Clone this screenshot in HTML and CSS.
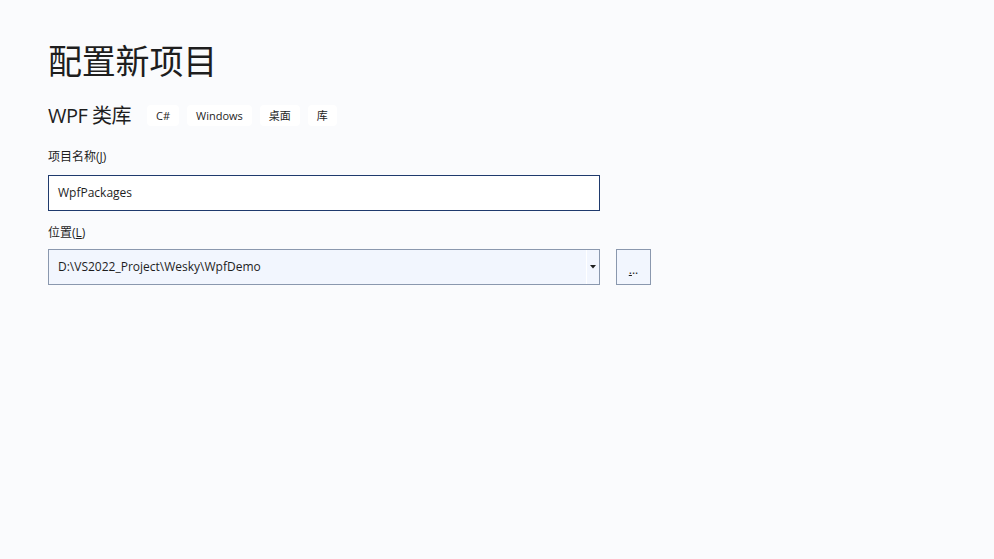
FILE: index.html
```html
<!DOCTYPE html>
<html lang="zh-CN">
<head>
<meta charset="utf-8">
<title>配置新项目</title>
<link rel="stylesheet" href="styles.css">
</head>
<body>
<main class="page">
  <h1 class="title">配置新项目</h1>
  <div class="subtitle-row">
    <span class="subtitle">WPF 类库</span>
    <ul class="tags">
      <li class="tag">C#</li>
      <li class="tag">Windows</li>
      <li class="tag">桌面</li>
      <li class="tag">库</li>
    </ul>
  </div>
  <label class="field-label">项目名称(<u>J</u>)</label>
  <div class="text-input">WpfPackages</div>
  <label class="field-label second">位置(<u>L</u>)</label>
  <div class="location-row">
    <div class="combo">
      <span class="combo-text">D:\VS2022_Project\Wesky\WpfDemo</span>
      <span class="combo-arrow">
        <svg width="6" height="4" viewBox="0 0 6 4"><path d="M0 0H6L3 3.5Z" fill="#1e1e1e"/></svg>
      </span>
    </div>
    <button class="browse"><u>.</u>..</button>
  </div>
</main>
</body>
</html>
```
FILE: styles.css
```css
html, body {
  margin: 0;
  padding: 0;
  background: #fafbfd;
}
body {
  font-family: "Open Sans", "Noto Sans", "Noto Sans CJK SC", sans-serif;
  color: #1e1e1e;
  width: 994px;
  height: 559px;
  overflow: hidden;
}
.page {
  display: flex;
  flex-direction: column;
  align-items: flex-start;
  padding: 38px 0 0 48px;
}
.title {
  margin: 0;
  font-family: "Noto Sans CJK SC", sans-serif;
  font-weight: 400;
  font-size: 34px;
  line-height: 44px;
  letter-spacing: -0.2px;
}
.subtitle-row {
  display: flex;
  align-items: center;
  margin-top: 23px;
  height: 21px;
}
.subtitle {
  font-family: "Open Sans", "Noto Sans CJK SC", sans-serif;
  font-size: 20px;
  line-height: 21px;
  letter-spacing: -0.5px;
  margin-right: 16px;
}
.tags {
  display: flex;
  gap: 8px;
  margin: 0;
  padding: 0;
  list-style: none;
}
.tag {
  background: #ffffff;
  border-radius: 4px;
  height: 21px;
  line-height: 21px;
  padding: 0 9px;
  font-size: 11px;
}
.field-label {
  display: block;
  margin-top: 23px;
  font-size: 12px;
  line-height: 16px;
  font-family: "Open Sans", "Noto Sans CJK SC", sans-serif;
}
.field-label u {
  text-underline-offset: 1px;
}
.field-label.second {
  margin-top: 14px;
}
.text-input {
  box-sizing: border-box;
  margin-top: 10px;
  width: 552px;
  height: 36px;
  border: 1px solid #1f3a6d;
  background: #ffffff;
  padding: 0 9px;
  font-size: 12px;
  line-height: 34px;
}
.location-row {
  display: flex;
  gap: 16px;
  margin-top: 8px;
}
.combo {
  box-sizing: border-box;
  width: 552px;
  height: 36px;
  border: 1px solid #8a98ae;
  background: #f2f6fe;
  display: flex;
  align-items: stretch;
}
.combo-text {
  flex: 1;
  padding: 0 9px;
  font-size: 12px;
  line-height: 34px;
}
.combo-arrow {
  width: 12px;
  border-left: 1px solid #ffffff;
  display: flex;
  align-items: center;
  justify-content: center;
  padding-bottom: 1px;
}
.browse {
  box-sizing: border-box;
  width: 35px;
  height: 36px;
  border: 1px solid #8a98ae;
  background: #f2f6fe;
  font-family: "Open Sans", sans-serif;
  font-size: 12px;
  color: #1e1e1e;
  padding: 4px 0 0 0;
  margin: 0;
}
.browse u {
  text-underline-offset: 1px;
}
```
